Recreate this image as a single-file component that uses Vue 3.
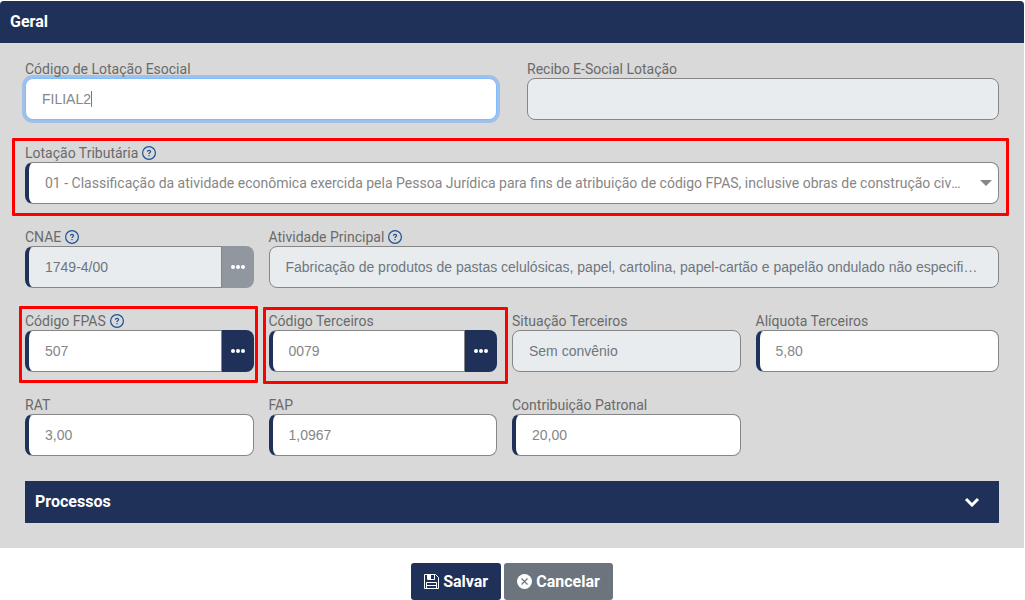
<script setup>
import { ref } from 'vue'

const esocial = ref('FILIAL2')
const recibo = ref('')
const lotacao = ref('01')
const cnae = ref('1749-4/00')
const atividade = ref('Fabricação de produtos de pastas celulósicas, papel, cartolina, papel-cartão e papelão ondulado não especificados anteriormente')
const fpas = ref('507')
const terceiros = ref('0079')
const situacao = ref('Sem convênio')
const aliquota = ref('5,80')
const rat = ref('3,00')
const fap = ref('1,0967')
const patronal = ref('20,00')
</script>

<template>
  <main class="page">
    <section class="panel">
      <h2 class="panel-title">Geral</h2>
      <form id="lotacao-form" class="panel-body" @submit.prevent>
        <div class="row halves">
          <div class="field">
            <label for="esocial">Código de Lotação Esocial</label>
            <div class="control">
              <input id="esocial" v-model="esocial" class="input focused" type="text" />
              <span class="caret"></span>
            </div>
          </div>
          <div class="field">
            <label for="recibo">Recibo E-Social Lotação</label>
            <input id="recibo" v-model="recibo" class="input" type="text" disabled />
          </div>
        </div>

        <div class="row">
          <div class="field marked wide-mark">
            <div class="caption">
              <label for="lotacao">Lotação Tributária</label>
              <svg class="help" viewBox="0 0 14 14" aria-hidden="true"><circle cx="7" cy="7" r="6.4" /><path d="M5.4 5.7C5.4 3.8 8.6 3.9 8.6 5.6C8.6 6.7 7 6.7 7 7.9M7 9v1.2" /></svg>
            </div>
            <div class="control">
              <select id="lotacao" v-model="lotacao" class="input select required">
                <option value="01">01 - Classificação da atividade econômica exercida pela Pessoa Jurídica para fins de atribuição de código FPAS, inclusive obras de construção civil própria</option>
              </select>
              <span class="arrow"></span>
            </div>
          </div>
        </div>

        <div class="row quarters">
          <div class="field">
            <div class="caption">
              <label for="cnae">CNAE</label>
              <svg class="help" viewBox="0 0 14 14" aria-hidden="true"><circle cx="7" cy="7" r="6.4" /><path d="M5.4 5.7C5.4 3.8 8.6 3.9 8.6 5.6C8.6 6.7 7 6.7 7 7.9M7 9v1.2" /></svg>
            </div>
            <div class="group">
              <input id="cnae" v-model="cnae" class="input required" type="text" disabled />
              <button type="button" class="lookup" aria-label="Pesquisar CNAE" disabled><i></i><i></i><i></i></button>
            </div>
          </div>
          <div class="field span-rest">
            <div class="caption">
              <label for="atividade">Atividade Principal</label>
              <svg class="help" viewBox="0 0 14 14" aria-hidden="true"><circle cx="7" cy="7" r="6.4" /><path d="M5.4 5.7C5.4 3.8 8.6 3.9 8.6 5.6C8.6 6.7 7 6.7 7 7.9M7 9v1.2" /></svg>
            </div>
            <input id="atividade" v-model="atividade" class="input long" type="text" disabled />
          </div>
        </div>

        <div class="row quarters">
          <div class="field marked fpas-mark">
            <div class="caption">
              <label for="fpas">Código FPAS</label>
              <svg class="help" viewBox="0 0 14 14" aria-hidden="true"><circle cx="7" cy="7" r="6.4" /><path d="M5.4 5.7C5.4 3.8 8.6 3.9 8.6 5.6C8.6 6.7 7 6.7 7 7.9M7 9v1.2" /></svg>
            </div>
            <div class="group">
              <input id="fpas" v-model="fpas" class="input required" type="text" />
              <button type="button" class="lookup" aria-label="Pesquisar código FPAS"><i></i><i></i><i></i></button>
            </div>
          </div>
          <div class="field marked terceiros-mark">
            <label for="terceiros">Código Terceiros</label>
            <div class="group">
              <input id="terceiros" v-model="terceiros" class="input required" type="text" />
              <button type="button" class="lookup" aria-label="Pesquisar código de terceiros"><i></i><i></i><i></i></button>
            </div>
          </div>
          <div class="field">
            <label for="situacao">Situação Terceiros</label>
            <input id="situacao" v-model="situacao" class="input" type="text" disabled />
          </div>
          <div class="field last">
            <label for="aliquota">Alíquota Terceiros</label>
            <input id="aliquota" v-model="aliquota" class="input required" type="text" />
          </div>
        </div>

        <div class="row quarters">
          <div class="field">
            <label for="rat">RAT</label>
            <input id="rat" v-model="rat" class="input required" type="text" />
          </div>
          <div class="field">
            <label for="fap">FAP</label>
            <input id="fap" v-model="fap" class="input required" type="text" />
          </div>
          <div class="field">
            <label for="patronal">Contribuição Patronal</label>
            <input id="patronal" v-model="patronal" class="input required" type="text" />
          </div>
        </div>

        <button type="button" class="section-toggle" aria-expanded="false">
          <span>Processos</span>
          <svg class="chevron" viewBox="0 0 16 10" aria-hidden="true"><path d="M2 2l6 6 6-6" /></svg>
        </button>
      </form>
    </section>

    <footer class="actions">
      <button type="submit" form="lotacao-form" class="btn save">
        <svg class="btn-icon" viewBox="0 0 15 15" aria-hidden="true">
          <path d="M.5.5h11l3 3v11H.5zM3.5.5v5h7v-5M2.5 14.5v-6h10v6" fill="none" stroke="#fff" />
          <path d="M4 1h3v4H4zM3 11h9v1H3z" fill="#fff" />
        </svg>
        <span>Salvar</span>
      </button>
      <button type="button" class="btn cancel">
        <svg class="btn-icon" viewBox="0 0 15 15" aria-hidden="true">
          <circle cx="7.5" cy="7.5" r="7.5" fill="#fff" />
          <path d="M4.5 4.5l6 6M10.5 4.5l-6 6" stroke="#6c757d" stroke-width="1.2" />
        </svg>
        <span>Cancelar</span>
      </button>
    </footer>
  </main>
</template>

<style>
body {
  background: #fff;
}
</style>

<style scoped>
.page {
  font-family: Roboto, "Liberation Sans", sans-serif;
  font-size: 14px;
  color: #6a6a6a;
  padding: 1px 1px 0 0;
}
.page *,
.page *::after {
  box-sizing: border-box;
}
.panel {
  background: #d9d9d9;
  border-radius: 4px 4px 0 0;
}
.panel-title {
  margin: 0;
  padding: 0 10px;
  background: #1f3158;
  color: #fff;
  font-size: 16px;
  font-weight: 700;
  line-height: 42px;
  border-radius: 4px 4px 0 0;
}
.panel-body {
  padding: 17px 25px 25px;
}
.row {
  margin-bottom: 24px;
}
.halves {
  display: grid;
  grid-template-columns: 1fr 1fr;
  gap: 30px;
}
.quarters {
  display: grid;
  grid-template-columns: repeat(4, 1fr);
}
.quarters .field {
  margin-right: 15px;
}
.quarters .last,
.quarters .span-rest {
  margin-right: 0;
}
.span-rest {
  grid-column: 2 / -1;
}
.field {
  position: relative;
  min-width: 0;
}
label {
  position: relative;
  z-index: 1;
  display: block;
  line-height: 18px;
}
.caption {
  display: flex;
  align-items: center;
  gap: 4px;
}
.help {
  width: 14px;
  height: 14px;
  fill: none;
  stroke: #1c5196;
  stroke-width: 1.2;
}
.control {
  position: relative;
}
.input {
  display: block;
  width: 100%;
  height: 42px;
  margin: 0;
  padding: 0 16px;
  border: 1px solid #868686;
  border-radius: 8px;
  background: #fff;
  color: #868686;
  font-family: "Liberation Sans", Arial, sans-serif;
  font-size: 14px;
  outline: none;
  text-overflow: ellipsis;
}
.input:disabled {
  background: #e8ecef;
  color: #6f767d;
  opacity: 1;
}
.input.long {
  padding-right: 20px;
}
.input.required {
  border-left: 4px solid #1f3158;
}
.input.focused {
  border-color: #80bdff;
  box-shadow: 0 0 0 3px #9fc1e8;
}
.caret {
  position: absolute;
  top: 13px;
  left: 66px;
  width: 1px;
  height: 16px;
  background: #777;
}
.select {
  appearance: none;
  padding-right: 34px;
  font-family: Roboto, "Liberation Sans", sans-serif;
  white-space: nowrap;
  overflow: hidden;
}
.arrow {
  position: absolute;
  top: 18px;
  right: 7px;
  border: 6px solid transparent;
  border-top-color: #868686;
  border-bottom: 0;
  pointer-events: none;
}
.group {
  display: flex;
}
.group .input {
  flex: 1;
  min-width: 0;
  border-radius: 8px 0 0 8px;
}
.lookup {
  display: flex;
  align-items: center;
  justify-content: center;
  gap: 1px;
  width: 32px;
  padding: 0;
  border: 0;
  border-radius: 0 8px 8px 0;
  background: #1f3158;
}
.lookup:disabled {
  background: #91979e;
}
.lookup i {
  width: 4px;
  height: 4px;
  border-radius: 50%;
  background: #fff;
}
.marked::after {
  content: "";
  position: absolute;
  border: 3px solid #f00;
  border-radius: 1px;
  pointer-events: none;
}
.wide-mark::after {
  inset: -6px -10px -12px -13px;
}
.fpas-mark::after {
  inset: -6px -4px -11px -6px;
}
.terceiros-mark::after {
  inset: -5px -11px -12px -6px;
}
.section-toggle {
  display: flex;
  align-items: center;
  justify-content: space-between;
  width: 100%;
  height: 42px;
  margin-top: 25px;
  padding: 0 19px 1px 10px;
  border: 0;
  background: #1f3158;
  color: #fff;
  font: 700 16px Roboto, "Liberation Sans", sans-serif;
}
.chevron {
  width: 16px;
  height: 10px;
  fill: none;
  stroke: #fff;
  stroke-width: 3;
}
.actions {
  display: flex;
  justify-content: center;
  gap: 3px;
  padding-top: 15px;
}
.btn {
  display: flex;
  align-items: center;
  gap: 4px;
  height: 37px;
  padding: 0 13px;
  border: 0;
  border-radius: 3px;
  color: #fff;
  font: 700 16px Roboto, "Liberation Sans", sans-serif;
}
.save {
  background: #1f3158;
}
.cancel {
  background: #6c757d;
}
.btn-icon {
  width: 15px;
  height: 15px;
}
</style>
